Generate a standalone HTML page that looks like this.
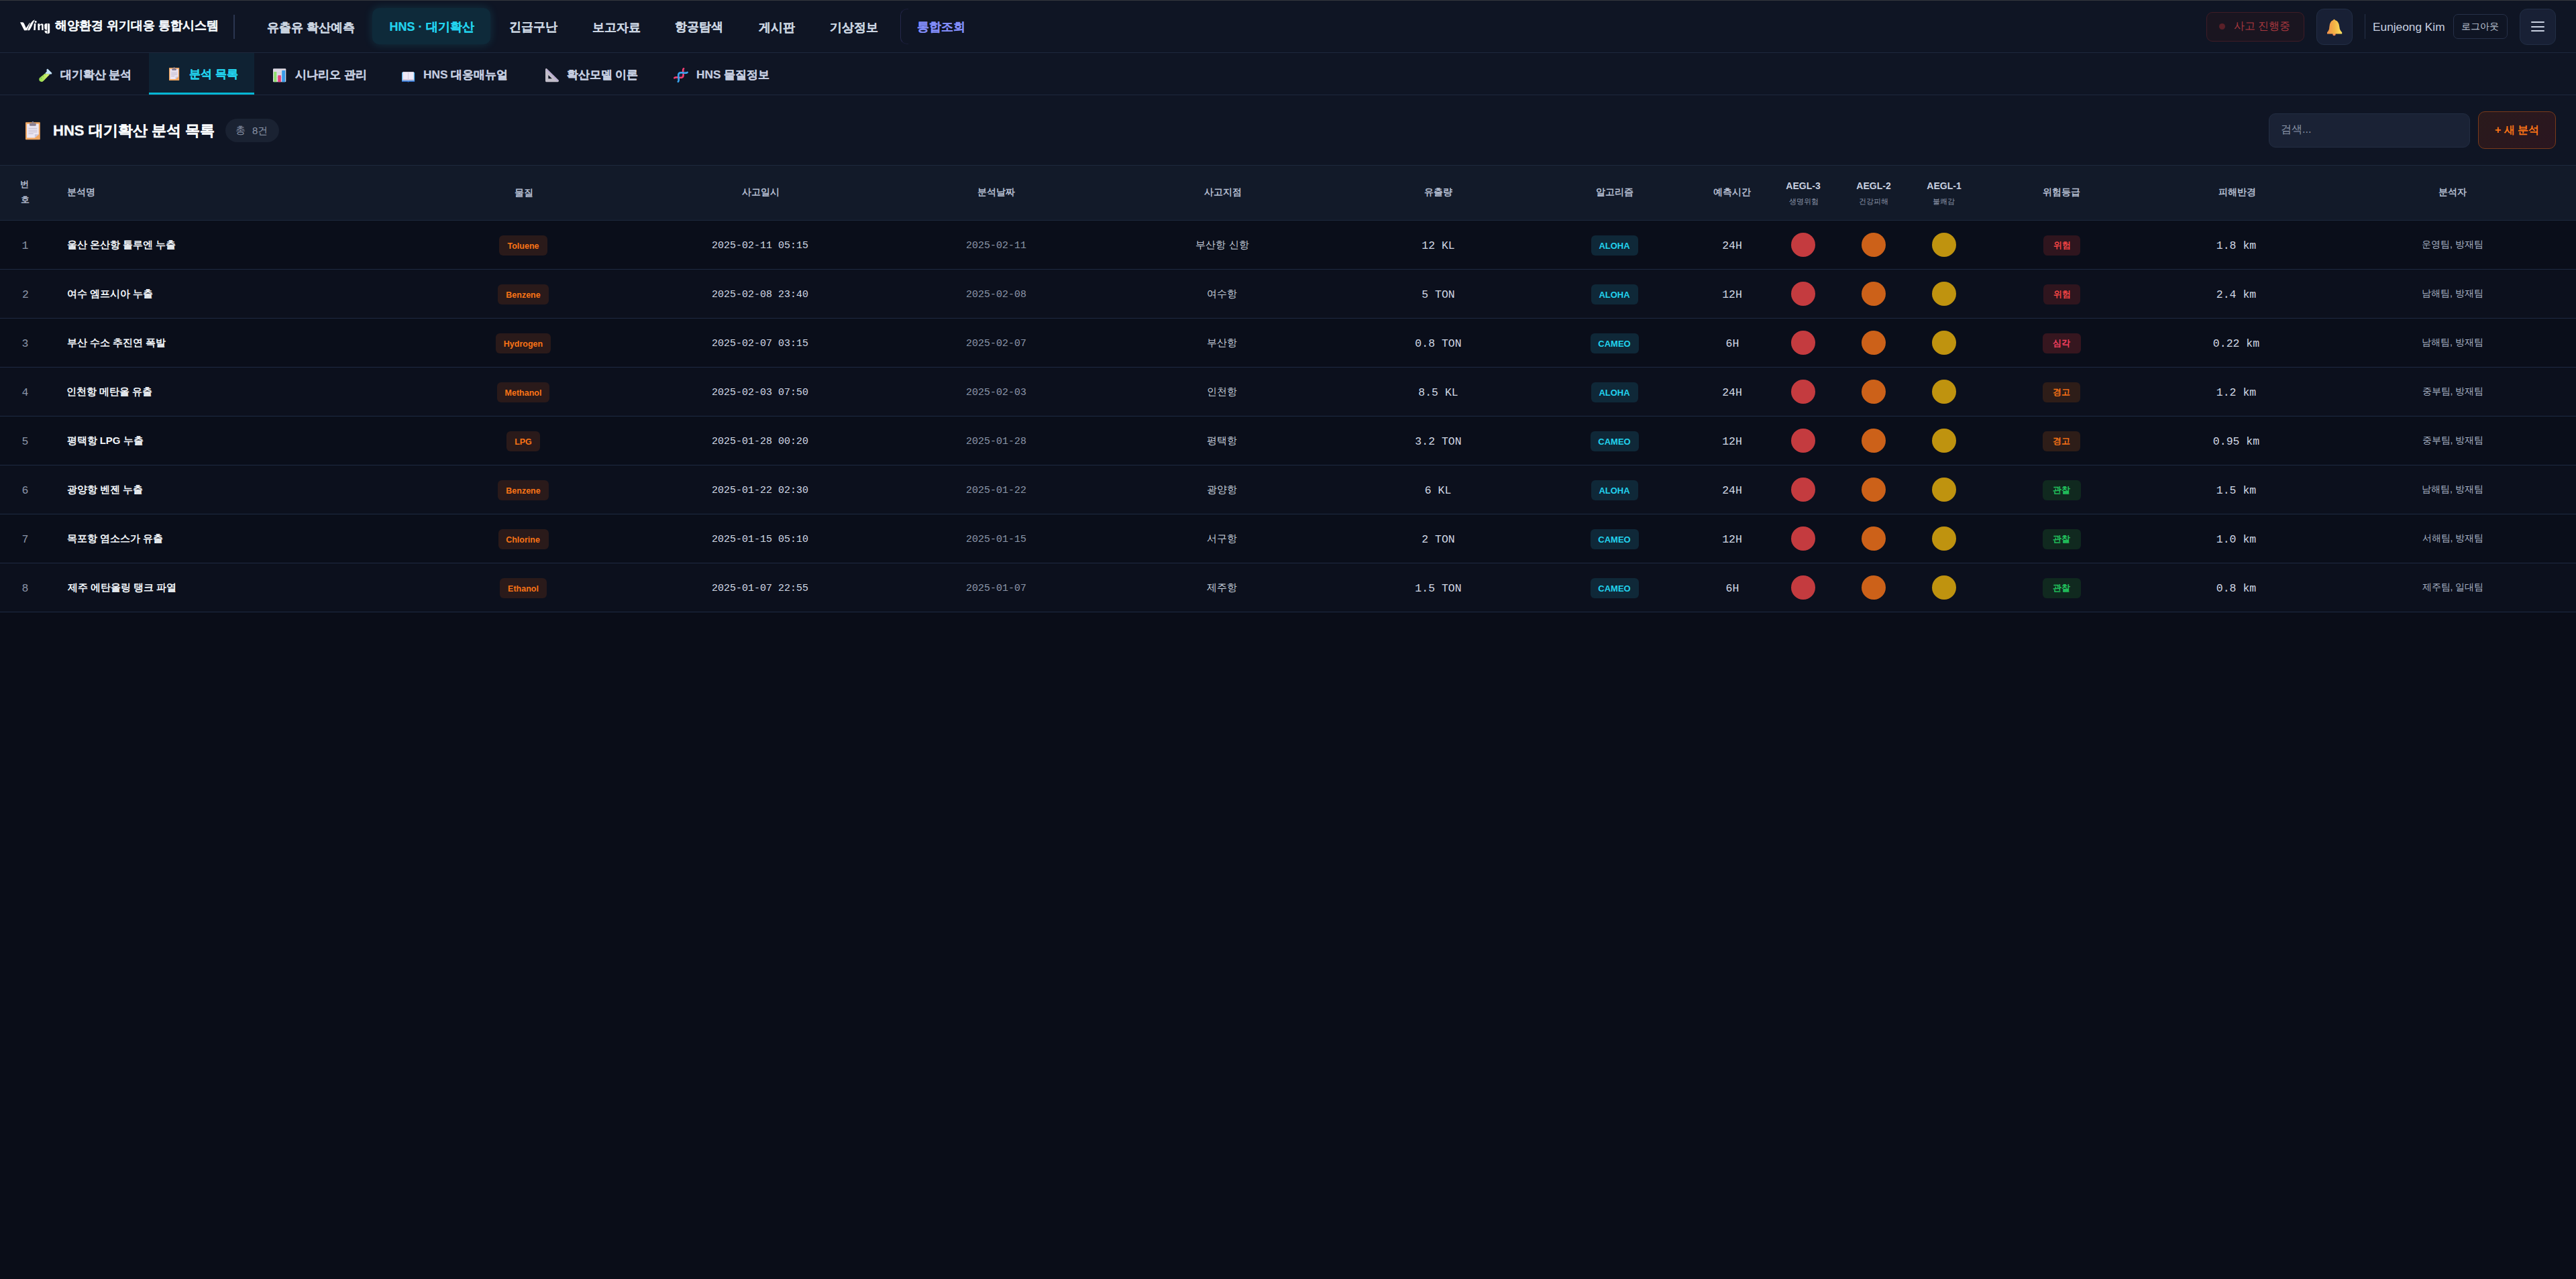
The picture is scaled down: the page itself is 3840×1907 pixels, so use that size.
<!DOCTYPE html>
<html lang="ko"><head><meta charset="utf-8"><title>HNS 대기확산 분석 목록</title>
<style>
*{margin:0;padding:0;box-sizing:border-box}
html,body{width:3840px;height:1907px;overflow:hidden}
body{background:#0a0d18;position:relative;font-family:'Liberation Sans',sans-serif}
.t{position:absolute;line-height:100px;height:100px;white-space:nowrap}
</style></head><body>
<div style="position:absolute;left:0px;top:0px;width:3840px;height:1px;background:#35383e"></div>
<div style="position:absolute;left:0px;top:1px;width:3840px;height:77px;background:#0f1524"></div>
<div style="position:absolute;left:0px;top:78px;width:3840px;height:1px;background:#1d283d"></div>
<div style="position:absolute;left:0px;top:79px;width:3840px;height:62px;background:#0f1524"></div>
<div style="position:absolute;left:0px;top:141px;width:3840px;height:1px;background:#1d283d"></div>
<div style="position:absolute;left:0px;top:142px;width:3840px;height:104px;background:#0f1524"></div>
<div style="position:absolute;left:0px;top:246px;width:3840px;height:1px;background:#1d283d"></div>
<div style="position:absolute;left:0px;top:247px;width:3840px;height:81px;background:#121a29"></div>
<div style="position:absolute;left:0px;top:328px;width:3840px;height:1px;background:#1d283d"></div>
<div style="position:absolute;left:0px;top:329px;width:3840px;height:72px;background:#0a0e1a"></div>
<div style="position:absolute;left:0px;top:401px;width:3840px;height:1px;background:#1e2a42"></div>
<div style="position:absolute;left:0px;top:402px;width:3840px;height:72px;background:#0c101d"></div>
<div style="position:absolute;left:0px;top:474px;width:3840px;height:1px;background:#1e2a42"></div>
<div style="position:absolute;left:0px;top:475px;width:3840px;height:72px;background:#0a0e1a"></div>
<div style="position:absolute;left:0px;top:547px;width:3840px;height:1px;background:#1e2a42"></div>
<div style="position:absolute;left:0px;top:548px;width:3840px;height:72px;background:#0c101d"></div>
<div style="position:absolute;left:0px;top:620px;width:3840px;height:1px;background:#1e2a42"></div>
<div style="position:absolute;left:0px;top:621px;width:3840px;height:72px;background:#0a0e1a"></div>
<div style="position:absolute;left:0px;top:693px;width:3840px;height:1px;background:#1e2a42"></div>
<div style="position:absolute;left:0px;top:694px;width:3840px;height:72px;background:#0c101d"></div>
<div style="position:absolute;left:0px;top:766px;width:3840px;height:1px;background:#1e2a42"></div>
<div style="position:absolute;left:0px;top:767px;width:3840px;height:72px;background:#0a0e1a"></div>
<div style="position:absolute;left:0px;top:839px;width:3840px;height:1px;background:#1e2a42"></div>
<div style="position:absolute;left:0px;top:840px;width:3840px;height:72px;background:#0c101d"></div>
<div style="position:absolute;left:0px;top:912px;width:3840px;height:1px;background:#1e2a42"></div>
<div style="position:absolute;left:348px;top:22px;width:2px;height:36px;background:#2a3550"></div>
<div style="position:absolute;left:555px;top:12px;width:176px;height:54px;background:#0e2a3a;border-radius:10px;box-shadow:0 0 14px rgba(34,211,238,0.16)"></div>
<div style="position:absolute;left:1342px;top:13px;width:12px;height:53px;border-left:1px solid #25284a;border-top:1px solid #1a1d38;border-bottom:1px solid #1a1d38;border-radius:10px 0 0 10px"></div>
<div style="position:absolute;left:3289px;top:18px;width:146px;height:44px;background:#1a1520;border:1px solid #3f1c26;border-radius:9px"></div>
<div style="position:absolute;left:3308px;top:35px;width:9px;height:9px;background:#5a2028;border-radius:50%"></div>
<div style="position:absolute;left:3453px;top:13px;width:54px;height:54px;background:#182035;border:1px solid #222e45;border-radius:11px"></div>
<div style="position:absolute;left:3525px;top:21px;width:1px;height:37px;background:#263048"></div>
<div style="position:absolute;left:3657px;top:21px;width:81px;height:37px;border:1px solid #263048;border-radius:7px"></div>
<div style="position:absolute;left:3756px;top:13px;width:54px;height:54px;background:#182035;border:1px solid #222e45;border-radius:11px"></div>
<div style="position:absolute;left:3773px;top:32px;width:20px;height:2px;background:#c8d0e0;border-radius:1px"></div>
<div style="position:absolute;left:3773px;top:38.5px;width:20px;height:2.0px;background:#c8d0e0;border-radius:1px"></div>
<div style="position:absolute;left:3773px;top:45px;width:20px;height:2px;background:#c8d0e0;border-radius:1px"></div>
<div style="position:absolute;left:222px;top:79px;width:156.5px;height:62px;background:#0f2233"></div>
<div style="position:absolute;left:222px;top:138px;width:156.5px;height:3px;background:#06b6d4"></div>
<div style="position:absolute;left:336px;top:177px;width:79.5px;height:35px;background:#1a2232;border-radius:18px"></div>
<div style="position:absolute;left:3382px;top:169px;width:300px;height:51px;background:#1a2235;border:1px solid #222d42;border-radius:10px"></div>
<div style="position:absolute;left:3694px;top:166px;width:116px;height:56px;background:linear-gradient(135deg,#2a1a1c,#2a1620);border:1.5px solid #7a3a1a;border-radius:10px"></div>
<div style="position:absolute;left:2670px;top:347.0px;width:36px;height:36.0px;background:#c43b3f;border-radius:50%"></div>
<div style="position:absolute;left:2775px;top:347.0px;width:36px;height:36.0px;background:#cc6119;border-radius:50%"></div>
<div style="position:absolute;left:2880px;top:347.0px;width:36px;height:36.0px;background:#bf930f;border-radius:50%"></div>
<div style="position:absolute;left:2670px;top:420.0px;width:36px;height:36.0px;background:#c43b3f;border-radius:50%"></div>
<div style="position:absolute;left:2775px;top:420.0px;width:36px;height:36.0px;background:#cc6119;border-radius:50%"></div>
<div style="position:absolute;left:2880px;top:420.0px;width:36px;height:36.0px;background:#bf930f;border-radius:50%"></div>
<div style="position:absolute;left:2670px;top:493.0px;width:36px;height:36.0px;background:#c43b3f;border-radius:50%"></div>
<div style="position:absolute;left:2775px;top:493.0px;width:36px;height:36.0px;background:#cc6119;border-radius:50%"></div>
<div style="position:absolute;left:2880px;top:493.0px;width:36px;height:36.0px;background:#bf930f;border-radius:50%"></div>
<div style="position:absolute;left:2670px;top:566.0px;width:36px;height:36.0px;background:#c43b3f;border-radius:50%"></div>
<div style="position:absolute;left:2775px;top:566.0px;width:36px;height:36.0px;background:#cc6119;border-radius:50%"></div>
<div style="position:absolute;left:2880px;top:566.0px;width:36px;height:36.0px;background:#bf930f;border-radius:50%"></div>
<div style="position:absolute;left:2670px;top:639.0px;width:36px;height:36.0px;background:#c43b3f;border-radius:50%"></div>
<div style="position:absolute;left:2775px;top:639.0px;width:36px;height:36.0px;background:#cc6119;border-radius:50%"></div>
<div style="position:absolute;left:2880px;top:639.0px;width:36px;height:36.0px;background:#bf930f;border-radius:50%"></div>
<div style="position:absolute;left:2670px;top:712.0px;width:36px;height:36.0px;background:#c43b3f;border-radius:50%"></div>
<div style="position:absolute;left:2775px;top:712.0px;width:36px;height:36.0px;background:#cc6119;border-radius:50%"></div>
<div style="position:absolute;left:2880px;top:712.0px;width:36px;height:36.0px;background:#bf930f;border-radius:50%"></div>
<div style="position:absolute;left:2670px;top:785.0px;width:36px;height:36.0px;background:#c43b3f;border-radius:50%"></div>
<div style="position:absolute;left:2775px;top:785.0px;width:36px;height:36.0px;background:#cc6119;border-radius:50%"></div>
<div style="position:absolute;left:2880px;top:785.0px;width:36px;height:36.0px;background:#bf930f;border-radius:50%"></div>
<div style="position:absolute;left:2670px;top:858.0px;width:36px;height:36.0px;background:#c43b3f;border-radius:50%"></div>
<div style="position:absolute;left:2775px;top:858.0px;width:36px;height:36.0px;background:#cc6119;border-radius:50%"></div>
<div style="position:absolute;left:2880px;top:858.0px;width:36px;height:36.0px;background:#bf930f;border-radius:50%"></div>
<svg style="position:absolute;left:57.7px;top:101.7px;width:19.700000000000003px;height:20.39999999999999px;overflow:visible" viewBox="300 260 760 790" preserveAspectRatio="none"><defs><linearGradient id="tg" x1="0" y1="0" x2="1" y2="0"><stop offset="0" stop-color="#8ed94a"/><stop offset="1" stop-color="#e6f77a"/></linearGradient></defs><path d="M640,560 L940,585 L560,990 Q470,1075 370,1010 L330,965 Q270,880 340,800 Z" fill="url(#tg)"/><path d="M640,560 L760,420 L735,335 L800,280 L1055,530 L1010,600 L940,585 Z" fill="#c4e4fa"/><path d="M650,545 L690,600 M520,670 L565,720 M400,790 L450,840" stroke="#1a8070" stroke-width="32"/></svg>
<svg style="position:absolute;left:251.9px;top:99.9px;width:15.200000000000017px;height:20.099999999999994px;overflow:visible" viewBox="305 190 590 780" preserveAspectRatio="none"><rect x="305" y="225" width="590" height="745" rx="20" fill="#f0a660"/><path d="M360,300 L840,300 L840,740 L680,890 L360,890 Z" fill="#ebe6f3"/><path d="M680,890 L680,740 L840,740 Z" fill="#c9c6dc"/><rect x="470" y="265" width="260" height="115" rx="25" fill="#8a7f92"/><circle cx="600" cy="228" r="38" fill="#8a7f92"/><path d="M425,485 H775 M425,565 H775 M425,640 H775 M425,715 H625" stroke="#bdb4c8" stroke-width="32"/></svg>
<svg style="position:absolute;left:406.8px;top:101.8px;width:19.30000000000001px;height:20.299999999999997px;overflow:visible" viewBox="265 265 745 785" preserveAspectRatio="none"><rect x="265" y="270" width="745" height="780" rx="45" fill="#dcd8e3"/><path d="M270,520 H1005 M270,790 H1005" stroke="#c8b8c0" stroke-width="14"/><rect x="315" y="460" width="155" height="585" fill="#8ee06c"/><rect x="545" y="660" width="180" height="385" rx="30" fill="#e8407c"/><rect x="775" y="385" width="190" height="660" rx="15" fill="#3a9be8"/></svg>
<svg style="position:absolute;left:599px;top:106.9px;width:19.100000000000023px;height:15.5px;overflow:visible" viewBox="270 460 740 600" preserveAspectRatio="none"><path d="M270,500 L1010,500 L1010,1030 L700,1030 L640,1060 L580,1030 L270,1030 Z" fill="#4fb4f5"/><rect x="270" y="985" width="740" height="45" fill="#3a62c8"/><rect x="320" y="465" width="640" height="490" fill="#efeaf7"/><rect x="320" y="890" width="640" height="65" fill="#cbbfd9"/><rect x="622" y="465" width="36" height="500" fill="#d2cde2"/></svg>
<svg style="position:absolute;left:813px;top:101.8px;width:20.100000000000023px;height:20.200000000000003px;overflow:visible" viewBox="270 265 780 780" preserveAspectRatio="none"><path d="M270,310 Q275,260 350,270 L1045,955 Q1060,1045 990,1045 L320,1045 Q270,1045 270,990 Z" fill="#c2bec9"/><path d="M440,650 L655,850 L440,850 Z" fill="#0f1524"/><circle cx="370" cy="360" r="26" fill="#a577f0"/><circle cx="442" cy="432" r="26" fill="#a577f0"/><circle cx="515" cy="505" r="26" fill="#a577f0"/><circle cx="588" cy="578" r="26" fill="#a577f0"/><circle cx="660" cy="650" r="26" fill="#a577f0"/><circle cx="732" cy="722" r="26" fill="#a577f0"/><circle cx="805" cy="795" r="26" fill="#a577f0"/><circle cx="878" cy="868" r="26" fill="#a577f0"/><circle cx="950" cy="940" r="26" fill="#a577f0"/></svg>
<svg style="position:absolute;left:1004.9px;top:102px;width:19.899999999999977px;height:20.099999999999994px;overflow:visible" viewBox="0 0 20 20" preserveAspectRatio="none"><g transform="translate(10,10) rotate(-45)"><path d="M-8.20,-2.74 V2.74" stroke="#3a3050" stroke-width="0.7"/><path d="M-6.60,-1.65 V1.65" stroke="#3a3050" stroke-width="0.7"/><path d="M-1.20,-2.89 V2.89" stroke="#3a3050" stroke-width="0.7"/><path d="M0.00,-3.12 V3.12" stroke="#3a3050" stroke-width="0.7"/><path d="M1.20,-2.89 V2.89" stroke="#3a3050" stroke-width="0.7"/><path d="M6.60,-1.65 V1.65" stroke="#3a3050" stroke-width="0.7"/><path d="M8.20,-2.74 V2.74" stroke="#3a3050" stroke-width="0.7"/><polyline points="-9.75,-3.90 -9.26,-3.85 -8.78,-3.71 -8.29,-3.47 -7.80,-3.16 -7.31,-2.76 -6.83,-2.29 -6.34,-1.77 -5.85,-1.21 -5.36,-0.61 -4.88,-0.00 -4.39,0.61 -3.90,1.21 -3.41,1.77 -2.92,2.29 -2.44,2.76 -1.95,3.16 -1.46,3.47 -0.97,3.71 -0.49,3.85 0.00,3.90 0.49,3.85 0.97,3.71 1.46,3.47 1.95,3.16 2.44,2.76 2.93,2.29 3.41,1.77 3.90,1.21 4.39,0.61 4.88,0.00 5.36,-0.61 5.85,-1.21 6.34,-1.77 6.82,-2.29 7.31,-2.76 7.80,-3.16 8.29,-3.47 8.77,-3.71 9.26,-3.85 9.75,-3.90" fill="none" stroke="#f23f74" stroke-width="2.6" stroke-linecap="round"/><polyline points="-9.75,3.90 -9.26,3.85 -8.78,3.71 -8.29,3.47 -7.80,3.16 -7.31,2.76 -6.83,2.29 -6.34,1.77 -5.85,1.21 -5.36,0.61 -4.88,0.00 -4.39,-0.61 -3.90,-1.21 -3.41,-1.77 -2.92,-2.29 -2.44,-2.76 -1.95,-3.16 -1.46,-3.47 -0.97,-3.71 -0.49,-3.85 0.00,-3.90 0.49,-3.85 0.97,-3.71 1.46,-3.47 1.95,-3.16 2.44,-2.76 2.93,-2.29 3.41,-1.77 3.90,-1.21 4.39,-0.61 4.88,-0.00 5.36,0.61 5.85,1.21 6.34,1.77 6.82,2.29 7.31,2.76 7.80,3.16 8.29,3.47 8.77,3.71 9.26,3.85 9.75,3.90" fill="none" stroke="#3aa6f2" stroke-width="2.6" stroke-linecap="round"/></g></svg>
<svg style="position:absolute;left:37.5px;top:180.6px;width:21.799999999999997px;height:27.30000000000001px;overflow:visible" viewBox="305 190 590 780" preserveAspectRatio="none"><rect x="305" y="225" width="590" height="745" rx="20" fill="#f0a660"/><path d="M360,300 L840,300 L840,740 L680,890 L360,890 Z" fill="#ebe6f3"/><path d="M680,890 L680,740 L840,740 Z" fill="#c9c6dc"/><rect x="470" y="265" width="260" height="115" rx="25" fill="#8a7f92"/><circle cx="600" cy="228" r="38" fill="#8a7f92"/><path d="M425,485 H775 M425,565 H775 M425,640 H775 M425,715 H625" stroke="#bdb4c8" stroke-width="26"/></svg>
<svg style="position:absolute;left:3468.9px;top:28.3px;width:22.199999999999818px;height:24.2px;overflow:visible" viewBox="260 160 835 910" preserveAspectRatio="none"><defs><linearGradient id="bg1" x1="0" y1="0" x2="1" y2="0"><stop offset="0" stop-color="#f0904a"/><stop offset="0.5" stop-color="#f3b545"/><stop offset="1" stop-color="#ffe462"/></linearGradient></defs><circle cx="655" cy="1025" r="85" fill="#f08a5a"/><path d="M600,235 Q655,150 710,235 Q930,300 950,620 Q965,800 1095,920 L1095,1010 L260,1010 L260,920 Q385,800 385,620 Q400,300 600,235 Z" fill="url(#bg1)"/></svg>
<svg style="position:absolute;left:29.8px;top:28.6px;width:44.400000000000006px;height:21.6px;overflow:visible" viewBox="180 250 1670 815" preserveAspectRatio="none"><g fill="#ffffff"><path d="M180,415 L335,408 Q385,430 425,525 L525,760 L470,865 L410,860 Z"/><path d="M430,860 L705,450 L742,438 L565,862 Z"/><path d="M595,862 C700,600 800,330 1012,262 C905,430 830,700 700,862 Z"/><path d="M962,480 L1062,468 L1035,852 L942,852 Z"/><circle cx="1050" cy="382" r="58"/><path d="M1168,492 L1270,480 L1282,852 L1180,852 Z"/><path d="M1268,565 C1330,468 1482,448 1482,565 L1482,852 L1392,852 L1392,605 C1392,545 1322,545 1282,625 Z"/><path d="M1545,565 C1555,480 1640,468 1700,478 L1692,845 C1600,850 1545,800 1545,700 Z"/><path d="M1728,470 L1842,500 L1842,1000 C1822,1052 1735,1062 1700,1042 L1728,980 Z"/><path d="M1548,880 L1700,880 L1700,1045 C1620,1052 1560,1000 1548,880 Z"/></g></svg>
<div class="t" style="left:82.00px;top:-12.30px;color:#f1f5f9;font-family:'Liberation Sans',sans-serif;font-size:18px;font-weight:700;-webkit-text-stroke:0.20px currentColor;">해양환경 위기대응 통합시스템</div>
<div class="t" style="left:398.00px;top:-9.20px;color:#cbd5e1;font-family:'Liberation Sans',sans-serif;font-size:18px;font-weight:700;-webkit-text-stroke:0.20px currentColor;">유출유 확산예측</div>
<div class="t" style="left:403.50px;top:-9.70px;width:480px;text-align:center;color:#22d3ee;font-family:'Liberation Sans',sans-serif;font-size:18px;font-weight:700;-webkit-text-stroke:0.20px currentColor;">HNS · 대기확산</div>
<div class="t" style="left:759.00px;top:-9.70px;color:#cbd5e1;font-family:'Liberation Sans',sans-serif;font-size:18px;font-weight:700;-webkit-text-stroke:0.20px currentColor;">긴급구난</div>
<div class="t" style="left:882.60px;top:-9.20px;color:#cbd5e1;font-family:'Liberation Sans',sans-serif;font-size:18px;font-weight:700;-webkit-text-stroke:0.20px currentColor;">보고자료</div>
<div class="t" style="left:1006.00px;top:-9.70px;color:#cbd5e1;font-family:'Liberation Sans',sans-serif;font-size:18px;font-weight:700;-webkit-text-stroke:0.20px currentColor;">항공탐색</div>
<div class="t" style="left:1131.00px;top:-9.20px;color:#cbd5e1;font-family:'Liberation Sans',sans-serif;font-size:18px;font-weight:700;-webkit-text-stroke:0.20px currentColor;">게시판</div>
<div class="t" style="left:1236.60px;top:-9.20px;color:#cbd5e1;font-family:'Liberation Sans',sans-serif;font-size:18px;font-weight:700;-webkit-text-stroke:0.20px currentColor;">기상정보</div>
<div class="t" style="left:1367.00px;top:-9.70px;color:#818cf8;font-family:'Liberation Sans',sans-serif;font-size:18px;font-weight:700;-webkit-text-stroke:0.20px currentColor;">통합조회</div>
<div class="t" style="left:3330.00px;top:-10.70px;color:#a8383f;font-family:'Liberation Sans',sans-serif;font-size:16px;font-weight:400;">사고 진행중</div>
<div class="t" style="left:3537.00px;top:-10.10px;color:#c8d0e0;font-family:'Liberation Sans',sans-serif;font-size:17.3px;font-weight:400;">Eunjeong Kim</div>
<div class="t" style="left:3669.00px;top:-11.00px;color:#c0c8d8;font-family:'Liberation Sans',sans-serif;font-size:14px;font-weight:400;">로그아웃</div>
<div class="t" style="left:89.70px;top:60.80px;color:#c5cde0;font-family:'Liberation Sans',sans-serif;font-size:17.3px;font-weight:700;-webkit-text-stroke:0.20px currentColor;">대기확산 분석</div>
<div class="t" style="left:282.00px;top:59.50px;color:#22d3ee;font-family:'Liberation Sans',sans-serif;font-size:17.3px;font-weight:700;-webkit-text-stroke:0.20px currentColor;">분석 목록</div>
<div class="t" style="left:440.00px;top:60.80px;color:#c5cde0;font-family:'Liberation Sans',sans-serif;font-size:17.3px;font-weight:700;-webkit-text-stroke:0.20px currentColor;">시나리오 관리</div>
<div class="t" style="left:631.00px;top:60.80px;color:#c5cde0;font-family:'Liberation Sans',sans-serif;font-size:17.3px;font-weight:700;-webkit-text-stroke:0.20px currentColor;">HNS 대응매뉴얼</div>
<div class="t" style="left:844.70px;top:60.80px;color:#c5cde0;font-family:'Liberation Sans',sans-serif;font-size:17.3px;font-weight:700;-webkit-text-stroke:0.20px currentColor;">확산모델 이론</div>
<div class="t" style="left:1038.00px;top:60.80px;color:#c5cde0;font-family:'Liberation Sans',sans-serif;font-size:17.3px;font-weight:700;-webkit-text-stroke:0.20px currentColor;">HNS 물질정보</div>
<div class="t" style="left:79.00px;top:144.90px;color:#f8fafc;font-family:'Liberation Sans',sans-serif;font-size:22px;font-weight:700;-webkit-text-stroke:0.35px currentColor;">HNS 대기확산 분석 목록</div>
<div class="t" style="left:350.50px;top:144.00px;color:#8b95a8;font-family:'Liberation Sans',sans-serif;font-size:15px;font-weight:400;">총</div>
<div class="t" style="left:376.00px;top:144.50px;color:#8b95a8;font-family:'Liberation Sans',sans-serif;font-size:15px;font-weight:400;">8건</div>
<div class="t" style="left:3400.00px;top:143.20px;color:#8a94a8;font-family:'Liberation Sans',sans-serif;font-size:16px;font-weight:400;">검색...</div>
<div class="t" style="left:3719.00px;top:143.80px;color:#f97316;font-family:'Liberation Sans',sans-serif;font-size:16px;font-weight:700;">+ 새 분석</div>
<div class="t" style="left:-203.20px;top:225.00px;width:480px;text-align:center;color:#b4bdd0;font-family:'Liberation Sans',sans-serif;font-size:13px;font-weight:700;">번</div>
<div class="t" style="left:-203.00px;top:248.10px;width:480px;text-align:center;color:#b4bdd0;font-family:'Liberation Sans',sans-serif;font-size:13px;font-weight:700;">호</div>
<div class="t" style="left:99.50px;top:237.20px;color:#b4bdd0;font-family:'Liberation Sans',sans-serif;font-size:13.5px;font-weight:700;">분석명</div>
<div class="t" style="left:540.50px;top:237.70px;width:480px;text-align:center;color:#b4bdd0;font-family:'Liberation Sans',sans-serif;font-size:13.5px;font-weight:700;">물질</div>
<div class="t" style="left:893.50px;top:237.20px;width:480px;text-align:center;color:#b4bdd0;font-family:'Liberation Sans',sans-serif;font-size:13.5px;font-weight:700;">사고일시</div>
<div class="t" style="left:1244.50px;top:237.20px;width:480px;text-align:center;color:#b4bdd0;font-family:'Liberation Sans',sans-serif;font-size:13.5px;font-weight:700;">분석날짜</div>
<div class="t" style="left:1582.50px;top:237.20px;width:480px;text-align:center;color:#b4bdd0;font-family:'Liberation Sans',sans-serif;font-size:13.5px;font-weight:700;">사고지점</div>
<div class="t" style="left:1903.50px;top:237.20px;width:480px;text-align:center;color:#b4bdd0;font-family:'Liberation Sans',sans-serif;font-size:13.5px;font-weight:700;">유출량</div>
<div class="t" style="left:2166.50px;top:237.20px;width:480px;text-align:center;color:#b4bdd0;font-family:'Liberation Sans',sans-serif;font-size:13.5px;font-weight:700;">알고리즘</div>
<div class="t" style="left:2341.50px;top:237.20px;width:480px;text-align:center;color:#b4bdd0;font-family:'Liberation Sans',sans-serif;font-size:13.5px;font-weight:700;">예측시간</div>
<div class="t" style="left:2448.00px;top:226.80px;width:480px;text-align:center;color:#c8d0e0;font-family:'Liberation Sans',sans-serif;font-size:14px;font-weight:700;">AEGL-3</div>
<div class="t" style="left:2448.50px;top:249.50px;width:480px;text-align:center;color:#8b95a8;font-family:'Liberation Sans',sans-serif;font-size:11px;font-weight:400;">생명위험</div>
<div class="t" style="left:2553.00px;top:226.80px;width:480px;text-align:center;color:#c8d0e0;font-family:'Liberation Sans',sans-serif;font-size:14px;font-weight:700;">AEGL-2</div>
<div class="t" style="left:2553.00px;top:249.50px;width:480px;text-align:center;color:#8b95a8;font-family:'Liberation Sans',sans-serif;font-size:11px;font-weight:400;">건강피해</div>
<div class="t" style="left:2658.00px;top:226.80px;width:480px;text-align:center;color:#c8d0e0;font-family:'Liberation Sans',sans-serif;font-size:14px;font-weight:700;">AEGL-1</div>
<div class="t" style="left:2657.50px;top:249.50px;width:480px;text-align:center;color:#8b95a8;font-family:'Liberation Sans',sans-serif;font-size:11px;font-weight:400;">불쾌감</div>
<div class="t" style="left:2833.00px;top:237.20px;width:480px;text-align:center;color:#b4bdd0;font-family:'Liberation Sans',sans-serif;font-size:13.5px;font-weight:700;">위험등급</div>
<div class="t" style="left:3094.50px;top:237.20px;width:480px;text-align:center;color:#b4bdd0;font-family:'Liberation Sans',sans-serif;font-size:13.5px;font-weight:700;">피해반경</div>
<div class="t" style="left:3415.50px;top:237.20px;width:480px;text-align:center;color:#b4bdd0;font-family:'Liberation Sans',sans-serif;font-size:13.5px;font-weight:700;">분석자</div>
<div class="t" style="left:-202.50px;top:316.50px;width:480px;text-align:center;color:#8b95a8;font-family:'Liberation Mono',monospace;font-size:16.5px;font-weight:400;">1</div>
<div class="t" style="left:99.50px;top:314.50px;color:#f1f5f9;font-family:'Liberation Sans',sans-serif;font-size:15px;font-weight:700;">울산 온산항 톨루엔 누출</div>
<div class="t" style="left:893.00px;top:317.00px;width:480px;text-align:center;color:#d1d8e4;font-family:'Liberation Mono',monospace;font-size:15px;font-weight:400;">2025-02-11 05:15</div>
<div class="t" style="left:1245.00px;top:317.00px;width:480px;text-align:center;color:#8b95a8;font-family:'Liberation Mono',monospace;font-size:15px;font-weight:400;">2025-02-11</div>
<div class="t" style="left:1582.00px;top:314.50px;width:480px;text-align:center;color:#c8d0dc;font-family:'Liberation Sans',sans-serif;font-size:15px;font-weight:400;">부산항 신항</div>
<div class="t" style="left:1904.00px;top:316.50px;width:480px;text-align:center;color:#d1d8e4;font-family:'Liberation Mono',monospace;font-size:16.5px;font-weight:400;">12 KL</div>
<div class="t" style="left:2342.00px;top:316.50px;width:480px;text-align:center;color:#d1d8e4;font-family:'Liberation Mono',monospace;font-size:16.5px;font-weight:400;">24H</div>
<div class="t" style="left:3093.50px;top:317.00px;width:480px;text-align:center;color:#d1d8e4;font-family:'Liberation Mono',monospace;font-size:16.5px;font-weight:400;">1.8 km</div>
<div class="t" style="left:3416.00px;top:314.00px;width:480px;text-align:center;color:#a8b2c4;font-family:'Liberation Sans',sans-serif;font-size:14px;font-weight:400;">운영팀, 방재팀</div>
<div class="t" style="left:-202.00px;top:389.50px;width:480px;text-align:center;color:#8b95a8;font-family:'Liberation Mono',monospace;font-size:16.5px;font-weight:400;">2</div>
<div class="t" style="left:99.50px;top:387.50px;color:#f1f5f9;font-family:'Liberation Sans',sans-serif;font-size:15px;font-weight:700;">여수 엠프시아 누출</div>
<div class="t" style="left:893.00px;top:390.00px;width:480px;text-align:center;color:#d1d8e4;font-family:'Liberation Mono',monospace;font-size:15px;font-weight:400;">2025-02-08 23:40</div>
<div class="t" style="left:1245.00px;top:390.00px;width:480px;text-align:center;color:#8b95a8;font-family:'Liberation Mono',monospace;font-size:15px;font-weight:400;">2025-02-08</div>
<div class="t" style="left:1581.00px;top:387.50px;width:480px;text-align:center;color:#c8d0dc;font-family:'Liberation Sans',sans-serif;font-size:15px;font-weight:400;">여수항</div>
<div class="t" style="left:1904.00px;top:389.50px;width:480px;text-align:center;color:#d1d8e4;font-family:'Liberation Mono',monospace;font-size:16.5px;font-weight:400;">5 TON</div>
<div class="t" style="left:2342.00px;top:389.50px;width:480px;text-align:center;color:#d1d8e4;font-family:'Liberation Mono',monospace;font-size:16.5px;font-weight:400;">12H</div>
<div class="t" style="left:3093.50px;top:390.00px;width:480px;text-align:center;color:#d1d8e4;font-family:'Liberation Mono',monospace;font-size:16.5px;font-weight:400;">2.4 km</div>
<div class="t" style="left:3416.00px;top:387.00px;width:480px;text-align:center;color:#a8b2c4;font-family:'Liberation Sans',sans-serif;font-size:14px;font-weight:400;">남해팀, 방재팀</div>
<div class="t" style="left:-202.50px;top:462.50px;width:480px;text-align:center;color:#8b95a8;font-family:'Liberation Mono',monospace;font-size:16.5px;font-weight:400;">3</div>
<div class="t" style="left:99.50px;top:460.50px;color:#f1f5f9;font-family:'Liberation Sans',sans-serif;font-size:15px;font-weight:700;">부산 수소 추진연 폭발</div>
<div class="t" style="left:893.00px;top:463.00px;width:480px;text-align:center;color:#d1d8e4;font-family:'Liberation Mono',monospace;font-size:15px;font-weight:400;">2025-02-07 03:15</div>
<div class="t" style="left:1245.00px;top:463.00px;width:480px;text-align:center;color:#8b95a8;font-family:'Liberation Mono',monospace;font-size:15px;font-weight:400;">2025-02-07</div>
<div class="t" style="left:1581.50px;top:460.50px;width:480px;text-align:center;color:#c8d0dc;font-family:'Liberation Sans',sans-serif;font-size:15px;font-weight:400;">부산항</div>
<div class="t" style="left:1904.00px;top:462.50px;width:480px;text-align:center;color:#d1d8e4;font-family:'Liberation Mono',monospace;font-size:16.5px;font-weight:400;">0.8 TON</div>
<div class="t" style="left:2342.50px;top:462.50px;width:480px;text-align:center;color:#d1d8e4;font-family:'Liberation Mono',monospace;font-size:16.5px;font-weight:400;">6H</div>
<div class="t" style="left:3093.50px;top:463.00px;width:480px;text-align:center;color:#d1d8e4;font-family:'Liberation Mono',monospace;font-size:16.5px;font-weight:400;">0.22 km</div>
<div class="t" style="left:3416.00px;top:460.00px;width:480px;text-align:center;color:#a8b2c4;font-family:'Liberation Sans',sans-serif;font-size:14px;font-weight:400;">남해팀, 방재팀</div>
<div class="t" style="left:-202.50px;top:535.50px;width:480px;text-align:center;color:#8b95a8;font-family:'Liberation Mono',monospace;font-size:16.5px;font-weight:400;">4</div>
<div class="t" style="left:98.50px;top:533.50px;color:#f1f5f9;font-family:'Liberation Sans',sans-serif;font-size:15px;font-weight:700;">인천항 메탄올 유출</div>
<div class="t" style="left:893.00px;top:536.00px;width:480px;text-align:center;color:#d1d8e4;font-family:'Liberation Mono',monospace;font-size:15px;font-weight:400;">2025-02-03 07:50</div>
<div class="t" style="left:1245.00px;top:536.00px;width:480px;text-align:center;color:#8b95a8;font-family:'Liberation Mono',monospace;font-size:15px;font-weight:400;">2025-02-03</div>
<div class="t" style="left:1581.00px;top:533.50px;width:480px;text-align:center;color:#c8d0dc;font-family:'Liberation Sans',sans-serif;font-size:15px;font-weight:400;">인천항</div>
<div class="t" style="left:1904.00px;top:535.50px;width:480px;text-align:center;color:#d1d8e4;font-family:'Liberation Mono',monospace;font-size:16.5px;font-weight:400;">8.5 KL</div>
<div class="t" style="left:2342.00px;top:535.50px;width:480px;text-align:center;color:#d1d8e4;font-family:'Liberation Mono',monospace;font-size:16.5px;font-weight:400;">24H</div>
<div class="t" style="left:3093.50px;top:536.00px;width:480px;text-align:center;color:#d1d8e4;font-family:'Liberation Mono',monospace;font-size:16.5px;font-weight:400;">1.2 km</div>
<div class="t" style="left:3416.50px;top:533.00px;width:480px;text-align:center;color:#a8b2c4;font-family:'Liberation Sans',sans-serif;font-size:14px;font-weight:400;">중부팀, 방재팀</div>
<div class="t" style="left:-202.50px;top:608.50px;width:480px;text-align:center;color:#8b95a8;font-family:'Liberation Mono',monospace;font-size:16.5px;font-weight:400;">5</div>
<div class="t" style="left:99.50px;top:606.50px;color:#f1f5f9;font-family:'Liberation Sans',sans-serif;font-size:15px;font-weight:700;">평택항 LPG 누출</div>
<div class="t" style="left:893.00px;top:609.00px;width:480px;text-align:center;color:#d1d8e4;font-family:'Liberation Mono',monospace;font-size:15px;font-weight:400;">2025-01-28 00:20</div>
<div class="t" style="left:1245.00px;top:609.00px;width:480px;text-align:center;color:#8b95a8;font-family:'Liberation Mono',monospace;font-size:15px;font-weight:400;">2025-01-28</div>
<div class="t" style="left:1581.50px;top:606.50px;width:480px;text-align:center;color:#c8d0dc;font-family:'Liberation Sans',sans-serif;font-size:15px;font-weight:400;">평택항</div>
<div class="t" style="left:1904.00px;top:608.50px;width:480px;text-align:center;color:#d1d8e4;font-family:'Liberation Mono',monospace;font-size:16.5px;font-weight:400;">3.2 TON</div>
<div class="t" style="left:2342.00px;top:608.50px;width:480px;text-align:center;color:#d1d8e4;font-family:'Liberation Mono',monospace;font-size:16.5px;font-weight:400;">12H</div>
<div class="t" style="left:3093.50px;top:609.00px;width:480px;text-align:center;color:#d1d8e4;font-family:'Liberation Mono',monospace;font-size:16.5px;font-weight:400;">0.95 km</div>
<div class="t" style="left:3416.50px;top:606.00px;width:480px;text-align:center;color:#a8b2c4;font-family:'Liberation Sans',sans-serif;font-size:14px;font-weight:400;">중부팀, 방재팀</div>
<div class="t" style="left:-202.50px;top:681.50px;width:480px;text-align:center;color:#8b95a8;font-family:'Liberation Mono',monospace;font-size:16.5px;font-weight:400;">6</div>
<div class="t" style="left:99.50px;top:679.50px;color:#f1f5f9;font-family:'Liberation Sans',sans-serif;font-size:15px;font-weight:700;">광양항 벤젠 누출</div>
<div class="t" style="left:893.00px;top:682.00px;width:480px;text-align:center;color:#d1d8e4;font-family:'Liberation Mono',monospace;font-size:15px;font-weight:400;">2025-01-22 02:30</div>
<div class="t" style="left:1245.00px;top:682.00px;width:480px;text-align:center;color:#8b95a8;font-family:'Liberation Mono',monospace;font-size:15px;font-weight:400;">2025-01-22</div>
<div class="t" style="left:1581.50px;top:679.50px;width:480px;text-align:center;color:#c8d0dc;font-family:'Liberation Sans',sans-serif;font-size:15px;font-weight:400;">광양항</div>
<div class="t" style="left:1903.50px;top:681.50px;width:480px;text-align:center;color:#d1d8e4;font-family:'Liberation Mono',monospace;font-size:16.5px;font-weight:400;">6 KL</div>
<div class="t" style="left:2342.00px;top:681.50px;width:480px;text-align:center;color:#d1d8e4;font-family:'Liberation Mono',monospace;font-size:16.5px;font-weight:400;">24H</div>
<div class="t" style="left:3093.50px;top:682.00px;width:480px;text-align:center;color:#d1d8e4;font-family:'Liberation Mono',monospace;font-size:16.5px;font-weight:400;">1.5 km</div>
<div class="t" style="left:3416.00px;top:679.00px;width:480px;text-align:center;color:#a8b2c4;font-family:'Liberation Sans',sans-serif;font-size:14px;font-weight:400;">남해팀, 방재팀</div>
<div class="t" style="left:-202.50px;top:754.50px;width:480px;text-align:center;color:#8b95a8;font-family:'Liberation Mono',monospace;font-size:16.5px;font-weight:400;">7</div>
<div class="t" style="left:99.50px;top:752.50px;color:#f1f5f9;font-family:'Liberation Sans',sans-serif;font-size:15px;font-weight:700;">목포항 염소스가 유출</div>
<div class="t" style="left:893.00px;top:755.00px;width:480px;text-align:center;color:#d1d8e4;font-family:'Liberation Mono',monospace;font-size:15px;font-weight:400;">2025-01-15 05:10</div>
<div class="t" style="left:1245.00px;top:755.00px;width:480px;text-align:center;color:#8b95a8;font-family:'Liberation Mono',monospace;font-size:15px;font-weight:400;">2025-01-15</div>
<div class="t" style="left:1581.50px;top:752.50px;width:480px;text-align:center;color:#c8d0dc;font-family:'Liberation Sans',sans-serif;font-size:15px;font-weight:400;">서구항</div>
<div class="t" style="left:1904.00px;top:754.50px;width:480px;text-align:center;color:#d1d8e4;font-family:'Liberation Mono',monospace;font-size:16.5px;font-weight:400;">2 TON</div>
<div class="t" style="left:2342.00px;top:754.50px;width:480px;text-align:center;color:#d1d8e4;font-family:'Liberation Mono',monospace;font-size:16.5px;font-weight:400;">12H</div>
<div class="t" style="left:3093.50px;top:755.00px;width:480px;text-align:center;color:#d1d8e4;font-family:'Liberation Mono',monospace;font-size:16.5px;font-weight:400;">1.0 km</div>
<div class="t" style="left:3416.50px;top:752.00px;width:480px;text-align:center;color:#a8b2c4;font-family:'Liberation Sans',sans-serif;font-size:14px;font-weight:400;">서해팀, 방재팀</div>
<div class="t" style="left:-202.50px;top:827.50px;width:480px;text-align:center;color:#8b95a8;font-family:'Liberation Mono',monospace;font-size:16.5px;font-weight:400;">8</div>
<div class="t" style="left:100.50px;top:825.50px;color:#f1f5f9;font-family:'Liberation Sans',sans-serif;font-size:15px;font-weight:700;">제주 에탄올링 탱크 파열</div>
<div class="t" style="left:893.00px;top:828.00px;width:480px;text-align:center;color:#d1d8e4;font-family:'Liberation Mono',monospace;font-size:15px;font-weight:400;">2025-01-07 22:55</div>
<div class="t" style="left:1245.00px;top:828.00px;width:480px;text-align:center;color:#8b95a8;font-family:'Liberation Mono',monospace;font-size:15px;font-weight:400;">2025-01-07</div>
<div class="t" style="left:1581.50px;top:825.50px;width:480px;text-align:center;color:#c8d0dc;font-family:'Liberation Sans',sans-serif;font-size:15px;font-weight:400;">제주항</div>
<div class="t" style="left:1904.00px;top:827.50px;width:480px;text-align:center;color:#d1d8e4;font-family:'Liberation Mono',monospace;font-size:16.5px;font-weight:400;">1.5 TON</div>
<div class="t" style="left:2342.50px;top:827.50px;width:480px;text-align:center;color:#d1d8e4;font-family:'Liberation Mono',monospace;font-size:16.5px;font-weight:400;">6H</div>
<div class="t" style="left:3093.50px;top:828.00px;width:480px;text-align:center;color:#d1d8e4;font-family:'Liberation Mono',monospace;font-size:16.5px;font-weight:400;">0.8 km</div>
<div class="t" style="left:3416.50px;top:825.00px;width:480px;text-align:center;color:#a8b2c4;font-family:'Liberation Sans',sans-serif;font-size:14px;font-weight:400;">제주팀, 일대팀</div>
<div style="position:absolute;left:744.0px;top:351.0px;width:72.0px;height:30px;background:#2a1a1a;border-radius:6px"></div>
<div class="t" style="left:540.00px;top:316.50px;width:480px;text-align:center;color:#f97316;font-family:'Liberation Sans',sans-serif;font-size:12.5px;font-weight:700">Toluene</div>
<div style="position:absolute;left:2371.5px;top:351.0px;width:70.0px;height:30px;background:#0f2838;border-radius:6px"></div>
<div class="t" style="left:2166.50px;top:316.50px;width:480px;text-align:center;color:#22d3ee;font-family:'Liberation Sans',sans-serif;font-size:13px;font-weight:700">ALOHA</div>
<div style="position:absolute;left:3045.5px;top:351.0px;width:55.0px;height:30px;background:#2f151e;border-radius:6px"></div>
<div class="t" style="left:2833.50px;top:315.50px;width:480px;text-align:center;color:#ef4444;font-family:'Liberation Sans',sans-serif;font-size:12.5px;font-weight:700">위험</div>
<div style="position:absolute;left:742.0px;top:424.0px;width:76.0px;height:30px;background:#2a1a1a;border-radius:6px"></div>
<div class="t" style="left:540.00px;top:389.50px;width:480px;text-align:center;color:#f97316;font-family:'Liberation Sans',sans-serif;font-size:12.5px;font-weight:700">Benzene</div>
<div style="position:absolute;left:2371.5px;top:424.0px;width:70.0px;height:30px;background:#0f2838;border-radius:6px"></div>
<div class="t" style="left:2166.50px;top:389.50px;width:480px;text-align:center;color:#22d3ee;font-family:'Liberation Sans',sans-serif;font-size:13px;font-weight:700">ALOHA</div>
<div style="position:absolute;left:3045.5px;top:424.0px;width:55.0px;height:30px;background:#2f151e;border-radius:6px"></div>
<div class="t" style="left:2833.50px;top:388.50px;width:480px;text-align:center;color:#ef4444;font-family:'Liberation Sans',sans-serif;font-size:12.5px;font-weight:700">위험</div>
<div style="position:absolute;left:739.0px;top:497.0px;width:82.0px;height:30px;background:#2a1a1a;border-radius:6px"></div>
<div class="t" style="left:540.00px;top:462.50px;width:480px;text-align:center;color:#f97316;font-family:'Liberation Sans',sans-serif;font-size:12.5px;font-weight:700">Hydrogen</div>
<div style="position:absolute;left:2370.5px;top:497.0px;width:72.0px;height:30px;background:#0f2838;border-radius:6px"></div>
<div class="t" style="left:2166.50px;top:462.50px;width:480px;text-align:center;color:#22d3ee;font-family:'Liberation Sans',sans-serif;font-size:13px;font-weight:700">CAMEO</div>
<div style="position:absolute;left:3044.5px;top:497.0px;width:57.0px;height:30px;background:#36161f;border-radius:6px"></div>
<div class="t" style="left:2832.50px;top:461.50px;width:480px;text-align:center;color:#f43f5e;font-family:'Liberation Sans',sans-serif;font-size:12.5px;font-weight:700">심각</div>
<div style="position:absolute;left:741.0px;top:570.0px;width:78.0px;height:30px;background:#2a1a1a;border-radius:6px"></div>
<div class="t" style="left:540.00px;top:535.50px;width:480px;text-align:center;color:#f97316;font-family:'Liberation Sans',sans-serif;font-size:12.5px;font-weight:700">Methanol</div>
<div style="position:absolute;left:2371.5px;top:570.0px;width:70.0px;height:30px;background:#0f2838;border-radius:6px"></div>
<div class="t" style="left:2166.50px;top:535.50px;width:480px;text-align:center;color:#22d3ee;font-family:'Liberation Sans',sans-serif;font-size:13px;font-weight:700">ALOHA</div>
<div style="position:absolute;left:3045.0px;top:570.0px;width:56.0px;height:30px;background:#2e1d18;border-radius:6px"></div>
<div class="t" style="left:2833.00px;top:535.00px;width:480px;text-align:center;color:#f97316;font-family:'Liberation Sans',sans-serif;font-size:12.5px;font-weight:700">경고</div>
<div style="position:absolute;left:755.0px;top:643.0px;width:50.0px;height:30px;background:#2a1a1a;border-radius:6px"></div>
<div class="t" style="left:540.00px;top:608.50px;width:480px;text-align:center;color:#f97316;font-family:'Liberation Sans',sans-serif;font-size:12.5px;font-weight:700">LPG</div>
<div style="position:absolute;left:2370.5px;top:643.0px;width:72.0px;height:30px;background:#0f2838;border-radius:6px"></div>
<div class="t" style="left:2166.50px;top:608.50px;width:480px;text-align:center;color:#22d3ee;font-family:'Liberation Sans',sans-serif;font-size:13px;font-weight:700">CAMEO</div>
<div style="position:absolute;left:3045.0px;top:643.0px;width:56.0px;height:30px;background:#2e1d18;border-radius:6px"></div>
<div class="t" style="left:2833.00px;top:608.00px;width:480px;text-align:center;color:#f97316;font-family:'Liberation Sans',sans-serif;font-size:12.5px;font-weight:700">경고</div>
<div style="position:absolute;left:742.0px;top:716.0px;width:76.0px;height:30px;background:#2a1a1a;border-radius:6px"></div>
<div class="t" style="left:540.00px;top:681.50px;width:480px;text-align:center;color:#f97316;font-family:'Liberation Sans',sans-serif;font-size:12.5px;font-weight:700">Benzene</div>
<div style="position:absolute;left:2371.5px;top:716.0px;width:70.0px;height:30px;background:#0f2838;border-radius:6px"></div>
<div class="t" style="left:2166.50px;top:681.50px;width:480px;text-align:center;color:#22d3ee;font-family:'Liberation Sans',sans-serif;font-size:13px;font-weight:700">ALOHA</div>
<div style="position:absolute;left:3044.5px;top:716.0px;width:57.0px;height:30px;background:#10291f;border-radius:6px"></div>
<div class="t" style="left:2832.50px;top:681.00px;width:480px;text-align:center;color:#22c55e;font-family:'Liberation Sans',sans-serif;font-size:12.5px;font-weight:700">관찰</div>
<div style="position:absolute;left:742.5px;top:789.0px;width:75.0px;height:30px;background:#2a1a1a;border-radius:6px"></div>
<div class="t" style="left:539.50px;top:754.50px;width:480px;text-align:center;color:#f97316;font-family:'Liberation Sans',sans-serif;font-size:12.5px;font-weight:700">Chlorine</div>
<div style="position:absolute;left:2370.5px;top:789.0px;width:72.0px;height:30px;background:#0f2838;border-radius:6px"></div>
<div class="t" style="left:2166.50px;top:754.50px;width:480px;text-align:center;color:#22d3ee;font-family:'Liberation Sans',sans-serif;font-size:13px;font-weight:700">CAMEO</div>
<div style="position:absolute;left:3044.5px;top:789.0px;width:57.0px;height:30px;background:#10291f;border-radius:6px"></div>
<div class="t" style="left:2832.50px;top:754.00px;width:480px;text-align:center;color:#22c55e;font-family:'Liberation Sans',sans-serif;font-size:12.5px;font-weight:700">관찰</div>
<div style="position:absolute;left:745.0px;top:862.0px;width:70.0px;height:30px;background:#2a1a1a;border-radius:6px"></div>
<div class="t" style="left:540.00px;top:827.50px;width:480px;text-align:center;color:#f97316;font-family:'Liberation Sans',sans-serif;font-size:12.5px;font-weight:700">Ethanol</div>
<div style="position:absolute;left:2370.5px;top:862.0px;width:72.0px;height:30px;background:#0f2838;border-radius:6px"></div>
<div class="t" style="left:2166.50px;top:827.50px;width:480px;text-align:center;color:#22d3ee;font-family:'Liberation Sans',sans-serif;font-size:13px;font-weight:700">CAMEO</div>
<div style="position:absolute;left:3044.5px;top:862.0px;width:57.0px;height:30px;background:#10291f;border-radius:6px"></div>
<div class="t" style="left:2832.50px;top:827.00px;width:480px;text-align:center;color:#22c55e;font-family:'Liberation Sans',sans-serif;font-size:12.5px;font-weight:700">관찰</div>
</body></html>
